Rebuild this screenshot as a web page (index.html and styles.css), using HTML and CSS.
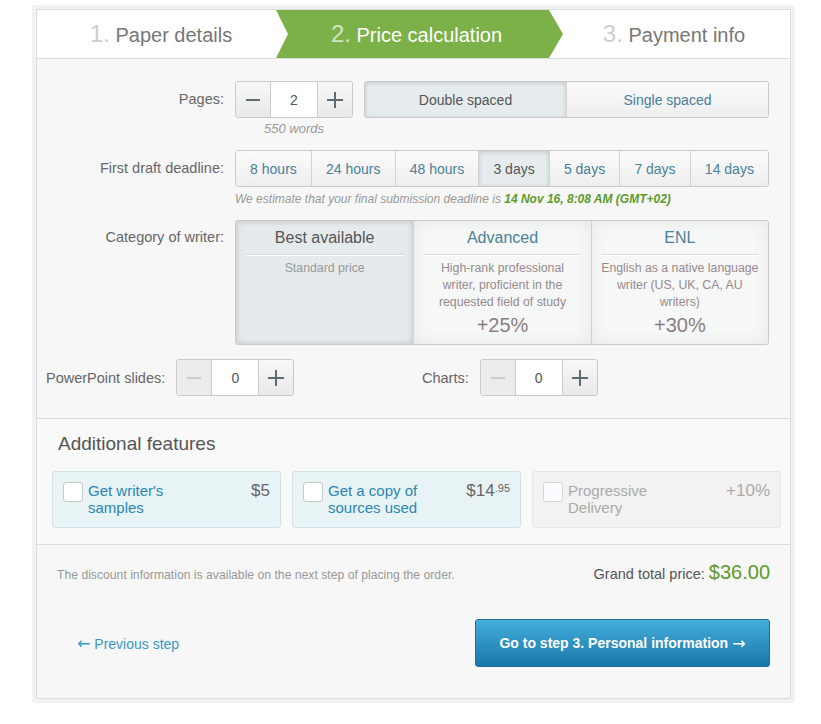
FILE: index.html
```html
<!DOCTYPE html>
<html lang="en">
<head>
<meta charset="utf-8">
<title>Price calculation</title>
<link rel="stylesheet" href="styles.css">
</head>
<body>
<div class="frame">
  <div class="panel">
    <nav class="tabs">
      <div class="tab tab-1"><span class="num">1.</span> Paper details</div>
      <div class="tab tab-2"><span class="num">2.</span> Price calculation</div>
      <div class="tab tab-3"><span class="num">3.</span> Payment info</div>
    </nav>

    <section class="form">
      <div class="row row-pages">
        <div class="label">Pages:</div>
        <div class="controls controls-pages">
          <div class="stepper-wrap">
            <div class="stepper">
              <div class="step-btn minus"><svg width="16" height="16" viewBox="0 0 16 16"><path d="M1 8h14" stroke="#5d6b75" stroke-width="2"/></svg></div>
              <div class="step-val">2</div>
              <div class="step-btn plus"><svg width="16" height="16" viewBox="0 0 16 16"><path d="M0 8h16M8 0v16" stroke="#5d6b75" stroke-width="2"/></svg></div>
            </div>
            <div class="caption">550 words</div>
          </div>
          <div class="seg seg-spacing">
            <div class="seg-btn selected">Double spaced</div>
            <div class="seg-btn">Single spaced</div>
          </div>
        </div>
      </div>

      <div class="row row-deadline">
        <div class="label">First draft deadline:</div>
        <div class="controls">
          <div class="seg seg-deadline">
            <div class="seg-btn">8 hours</div>
            <div class="seg-btn">24 hours</div>
            <div class="seg-btn">48 hours</div>
            <div class="seg-btn selected">3 days</div>
            <div class="seg-btn">5 days</div>
            <div class="seg-btn">7 days</div>
            <div class="seg-btn">14 days</div>
          </div>
          <div class="note">We estimate that your final submission deadline is <b>14 Nov 16, 8:08 AM (GMT+02)</b></div>
        </div>
      </div>

      <div class="row row-category">
        <div class="label label-top">Category of writer:</div>
        <div class="cards">
          <div class="card selected">
            <div class="card-title">Best available</div>
            <div class="card-desc">Standard price</div>
          </div>
          <div class="card">
            <div class="card-title">Advanced</div>
            <div class="card-desc">High-rank professional<br>writer, proficient in the<br>requested field of study</div>
            <div class="card-pct">+25%</div>
          </div>
          <div class="card">
            <div class="card-title">ENL</div>
            <div class="card-desc">English as a native language<br>writer (US, UK, CA, AU<br>writers)</div>
            <div class="card-pct">+30%</div>
          </div>
        </div>
      </div>

      <div class="extras">
        <div class="extra">
          <span class="extra-label">PowerPoint slides:</span>
          <div class="stepper">
            <div class="step-btn minus disabled"><svg width="16" height="16" viewBox="0 0 16 16"><path d="M1 8h14" stroke="#cccccc" stroke-width="2"/></svg></div>
            <div class="step-val">0</div>
            <div class="step-btn plus"><svg width="16" height="16" viewBox="0 0 16 16"><path d="M0 8h16M8 0v16" stroke="#5d6b75" stroke-width="2"/></svg></div>
          </div>
        </div>
        <div class="extra">
          <span class="extra-label">Charts:</span>
          <div class="stepper">
            <div class="step-btn minus disabled"><svg width="16" height="16" viewBox="0 0 16 16"><path d="M1 8h14" stroke="#cccccc" stroke-width="2"/></svg></div>
            <div class="step-val">0</div>
            <div class="step-btn plus"><svg width="16" height="16" viewBox="0 0 16 16"><path d="M0 8h16M8 0v16" stroke="#5d6b75" stroke-width="2"/></svg></div>
          </div>
        </div>
      </div>
    </section>

    <section class="additional">
      <h2>Additional features</h2>
      <div class="features">
        <div class="feature">
          <span class="check"></span>
          <span class="feature-text">Get writer's samples</span>
          <span class="feature-price">$5</span>
        </div>
        <div class="feature">
          <span class="check"></span>
          <span class="feature-text">Get a copy of sources used</span>
          <span class="feature-price">$14<sup>.95</sup></span>
        </div>
        <div class="feature disabled">
          <span class="check"></span>
          <span class="feature-text">Progressive Delivery</span>
          <span class="feature-price">+10%</span>
        </div>
      </div>
    </section>

    <footer class="footer">
      <div class="footer-top">
        <span class="discount">The discount information is available on the next step of placing the order.</span>
        <span class="total">Grand total price: <span class="total-sum">$36.00</span></span>
      </div>
      <div class="footer-nav">
        <a class="prev" href="#"><span class="arrow">&larr;</span> Previous step</a>
        <a class="next" href="#">Go to step 3. Personal information <span class="arrow">&rarr;</span></a>
      </div>
    </footer>
  </div>
</div>
</body>
</html>
```
FILE: styles.css
```css
body {
  margin: 0;
  background: #fff;
  font-family: "Liberation Sans", Arial, sans-serif;
}

.frame {
  margin: 5px 0 0 32px;
  width: 763px;
  height: 698px;
  box-sizing: border-box;
  padding: 4px;
  background: #f2f2f2;
  border-radius: 3px;
}

.panel {
  height: 100%;
  box-sizing: border-box;
  border: 1px solid #dcdcdc;
  background: #f7f7f7;
  display: flex;
  flex-direction: column;
}

/* tabs */
.tabs {
  display: flex;
  height: 48px;
  background: #fff;
  border-bottom: 1px solid #dcdcdc;
}

.tab {
  box-sizing: border-box;
  line-height: 48px;
  font-size: 20px;
  color: #777;
  text-align: center;
  white-space: nowrap;
}

.tab .num {
  font-size: 24px;
  color: #cdcdcd;
}

.tab-1 {
  width: 239px;
  padding-left: 9px;
}

.tab-2 {
  width: 287px;
  padding: 0 18px 0 12px;
  background: #7bb148;
  color: #fff;
  clip-path: polygon(0 0, calc(100% - 14px) 0, 100% 50%, calc(100% - 14px) 100%, 0 100%, 12px 50%);
}

.tab-2 .num {
  color: #d3e6c2;
}

.tab-3 {
  flex: 1;
  padding-right: 5px;
}

/* form */
.form {
  padding: 22px 21px 22px 0;
}

.row {
  display: grid;
  grid-template-columns: 187px 1fr;
  column-gap: 11px;
}

.label {
  text-align: right;
  font-size: 14.5px;
  color: #666;
  line-height: 37px;
}

.label-top {
  line-height: 18px;
  padding-top: 8px;
}

.row-pages,
.row-deadline {
  margin-bottom: 14px;
}

.controls-pages {
  display: flex;
  gap: 11px;
  align-items: flex-start;
}

.stepper {
  display: flex;
  width: 118px;
  height: 37px;
  box-sizing: border-box;
  border: 1px solid #cacaca;
  border-radius: 3px;
  overflow: hidden;
  flex: none;
}

.step-btn {
  width: 34px;
  display: flex;
  align-items: center;
  justify-content: center;
  background: linear-gradient(#f8f8f8, #e9e9e9);
}

.step-btn.minus {
  border-right: 1px solid #cacaca;
}

.step-btn.plus {
  border-left: 1px solid #cacaca;
}

.step-btn.disabled {
  background: #ececec;
}

.step-val {
  flex: 1;
  background: #fff;
  display: flex;
  align-items: center;
  justify-content: center;
  font-size: 14px;
  color: #555;
}

.caption {
  text-align: center;
  font-size: 13px;
  font-style: italic;
  color: #999;
  line-height: 14px;
  margin-top: 4px;
}

.seg {
  display: flex;
  height: 37px;
  box-sizing: border-box;
  border: 1px solid #cacaca;
  border-radius: 3px;
  overflow: hidden;
}

.seg-spacing {
  flex: 1;
}

.seg-spacing .seg-btn {
  flex: 1 1 0;
}

.seg-btn {
  flex: 1 1 auto;
  padding: 0 13px;
  display: flex;
  align-items: center;
  justify-content: center;
  font-size: 14px;
  color: #4a8199;
  background: linear-gradient(#fbfbfb, #eeeeee);
  border-left: 1px solid #d2d2d2;
  white-space: nowrap;
}

.seg-btn:first-child {
  border-left: none;
}

.seg-btn.selected {
  background: #e6ebed;
  color: #555;
  box-shadow: inset 0 1px 4px rgba(0, 0, 0, 0.16);
}

.note {
  font-size: 12px;
  font-style: italic;
  color: #999;
  line-height: 14px;
  margin-top: 5px;
}

.note b {
  color: #5c9a2c;
}

/* writer category */
.row-category {
  margin-top: 14px;
}

.cards {
  display: grid;
  grid-template-columns: repeat(3, 1fr);
  height: 125px;
  box-sizing: border-box;
  border: 1px solid #cacaca;
  border-radius: 3px;
  overflow: hidden;
}

.card {
  text-align: center;
  background: #f6f7f7;
  box-shadow: inset 0 0 16px rgba(0, 0, 0, 0.07);
  border-left: 1px solid #d2d2d2;
}

.card:first-child {
  border-left: none;
}

.card.selected {
  background: #e5eaec;
  box-shadow: inset 0 0 6px rgba(0, 0, 0, 0.18);
}

.card-title {
  height: 33px;
  line-height: 34px;
  font-size: 16px;
  color: #4a8199;
  margin: 0 10px;
  border-bottom: 1px solid #d8dcdd;
  box-shadow: 0 1px 0 #fff;
}

.card.selected .card-title {
  color: #555;
}

.card-desc {
  font-size: 12.3px;
  line-height: 17px;
  color: #978a8e;
  margin-top: 5px;
  padding: 0 4px;
  white-space: nowrap;
}

.card.selected .card-desc {
  color: #999;
}

.card-pct {
  font-size: 20px;
  line-height: 24px;
  color: #8a7e81;
  margin-top: 2px;
}

/* slides / charts */
.extras {
  display: grid;
  grid-template-columns: 376px 1fr;
  margin-top: 14px;
}

.extra {
  display: flex;
  align-items: center;
  gap: 11px;
  padding-left: 9px;
}

.extra-label {
  font-size: 14.5px;
  color: #666;
}

/* additional features */
.additional {
  border-top: 1px solid #dcdcdc;
  padding: 14px 9px 16px 15px;
  background: #f9f9f9;
}

.additional h2 {
  margin: 0 0 16px 6px;
  font-size: 19px;
  line-height: 22px;
  font-weight: normal;
  color: #555;
}

.features {
  display: grid;
  grid-template-columns: 229px 229px 1fr;
  gap: 11px;
}

.feature {
  height: 57px;
  box-sizing: border-box;
  display: flex;
  align-items: flex-start;
  padding: 10px 10px 0 10px;
  border: 1px solid #cfe2e8;
  border-radius: 3px;
  background: #e8f3f6;
}

.check {
  flex: none;
  width: 20px;
  height: 20px;
  box-sizing: border-box;
  border: 1px solid #c8c8c8;
  border-radius: 3px;
  background: #fff;
  margin-right: 5px;
}

.feature-text {
  width: 125px;
  font-size: 15px;
  line-height: 17px;
  color: #2b87b0;
}

.feature-price {
  margin-left: auto;
  font-size: 17px;
  line-height: 18px;
  color: #666;
}

.feature-price sup {
  font-size: 11px;
  vertical-align: top;
  position: relative;
  top: -3px;
}

.feature.disabled {
  background: #f2f2f2;
  border-color: #e6e6e6;
}

.feature.disabled .check {
  border-color: #d6d6d6;
  background: #fafcfd;
}

.feature.disabled .feature-text,
.feature.disabled .feature-price {
  color: #aaa;
}

/* footer */
.footer {
  flex: 1;
  border-top: 1px solid #dcdcdc;
  padding: 16px 20px 0 20px;
}

.footer-top {
  display: flex;
  justify-content: space-between;
  align-items: baseline;
  height: 24px;
}

.discount {
  font-size: 12.2px;
  color: #999;
}

.total {
  font-size: 14.5px;
  color: #555;
}

.total-sum {
  font-size: 20px;
  color: #5c9a2c;
}

.footer-nav {
  display: flex;
  justify-content: space-between;
  align-items: center;
  margin-top: 34px;
}

.arrow {
  font-family: "DejaVu Sans", sans-serif;
  font-weight: normal;
  font-size: 16px;
}

.prev {
  margin-left: 20px;
  font-size: 14px;
  color: #3a97c9;
  text-decoration: none;
}

.next {
  width: 295px;
  height: 48px;
  box-sizing: border-box;
  display: flex;
  align-items: center;
  justify-content: center;
  gap: 4px;
  border: 1px solid #1c6e9c;
  border-radius: 3px;
  background: linear-gradient(#43aedb, #1b76a9);
  color: #fff;
  font-size: 14px;
  font-weight: bold;
  text-decoration: none;
}
```
